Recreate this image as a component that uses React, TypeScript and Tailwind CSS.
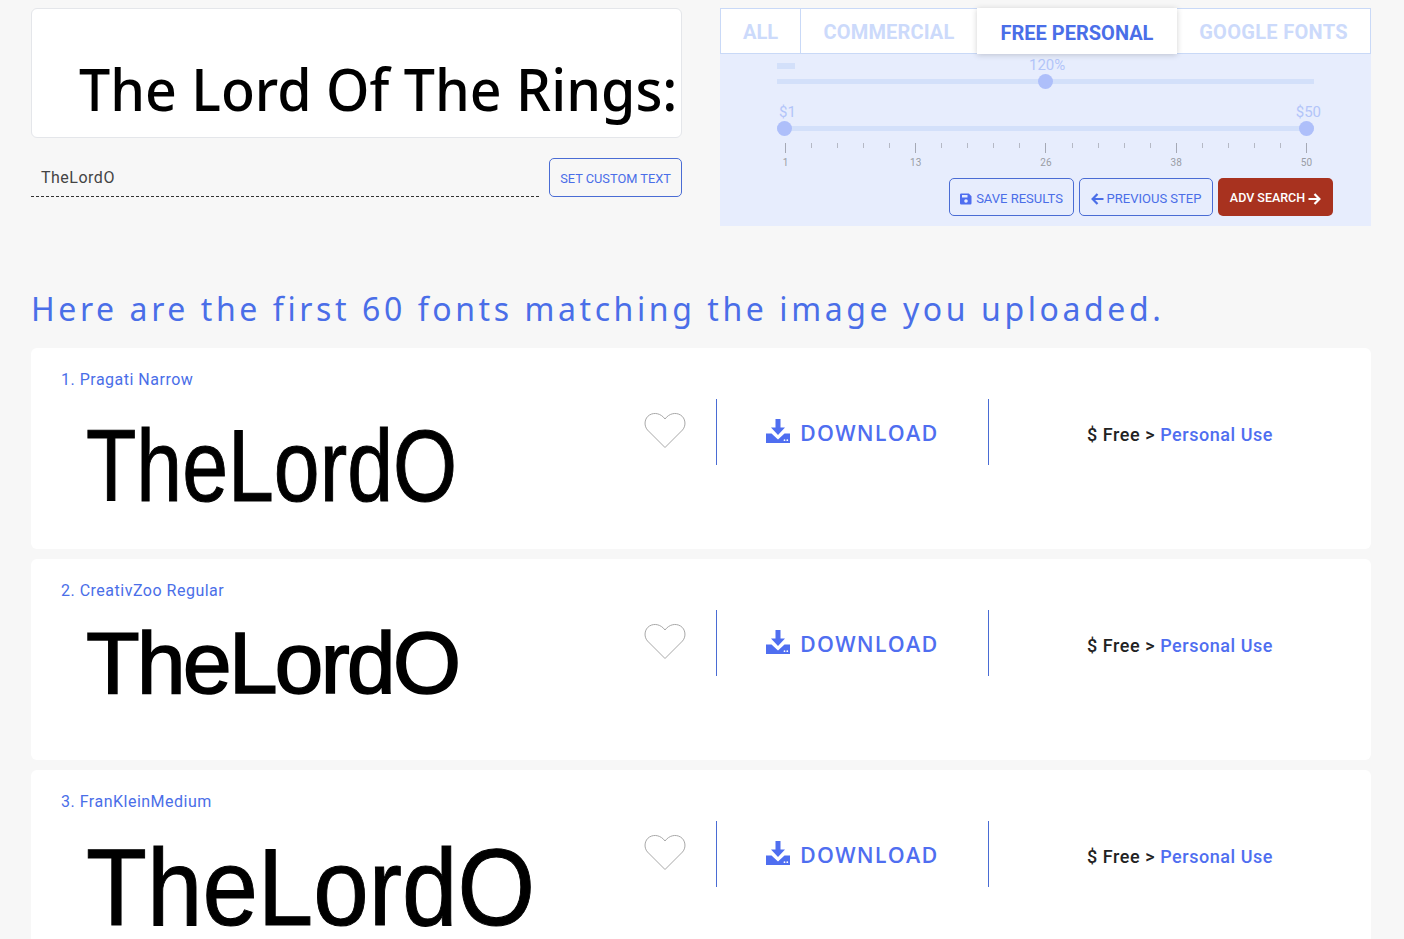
const ticks = Array.from({ length: 21 }, (_, i) => i);
const majorLabels: Record<number, string> = { 0: "1", 5: "13", 10: "26", 15: "38", 20: "50" };

function Heart() {
  return (
    <svg width="42" height="37" viewBox="0 0 42 37" fill="none" stroke="#a8a8a8" strokeWidth="1">
      <path d="M21 35.5 L3.5 18 C-0.5 13.5 0.5 6 5.5 3 C10.5 0 17 1.5 21 7 C25 1.5 31.5 0 36.5 3 C41.5 6 42.5 13.5 38.5 18 Z" />
    </svg>
  );
}

function DownloadIcon() {
  return (
    <svg width="24" height="24" viewBox="0 0 24 24" fill="#4f6ef0">
      <path d="M9.5 0h5v8.5h4.5l-7 7.5-7-7.5h4.5z" />
      <path d="M0 14.5h5.5l6.5 6 6.5-6H24V24H0z" />
      <circle cx="18.5" cy="21.2" r="0.9" fill="#fff" />
      <circle cx="21.3" cy="21.2" r="0.9" fill="#fff" />
    </svg>
  );
}

function SaveIcon() {
  return (
    <svg width="12" height="12" viewBox="0 0 12 12" fill="#4f6ef0">
      <path fillRule="evenodd" d="M1.2 0.5h7.6L11.5 3.2v7.1a1.2 1.2 0 0 1-1.2 1.2H1.2A1.2 1.2 0 0 1 0 10.3V1.7A1.2 1.2 0 0 1 1.2 0.5zM2 2v2.5h5.5V2zM6 6.2a1.8 1.8 0 1 0 0 3.6a1.8 1.8 0 0 0 0-3.6z" />
    </svg>
  );
}

function Arrow({ left }: { left?: boolean }) {
  return (
    <svg width="13" height="12" viewBox="0 0 13 12" fill="none" stroke="currentColor" strokeWidth="2.2" className={left ? "" : "rotate-180"}>
      <path d="M12.5 6H2M6.5 1L1.6 6l4.9 5" />
    </svg>
  );
}

function Row({ title, sample, sampleClass, boxClass }: { title: string; sample: string; sampleClass: string; boxClass: string }) {
  return (
    <div className={"bg-white rounded-md flex shrink-0 " + boxClass}>
      <div className="w-[610px] pl-[30px] pt-[22px] shrink-0">
        <div className="text-[16px] leading-[20px] tracking-[0.5px] text-[#4a6ee8] font-['Roboto',sans-serif]">{title}</div>
        <div className={"text-black whitespace-nowrap origin-left ml-[25px] w-fit " + sampleClass}>{sample}</div>
      </div>
      <div className="w-[75px] shrink-0 pt-[64px] pl-[3px]"><Heart /></div>
      <div className="w-[273px] h-[66px] mt-[51px] shrink-0 border-x border-[#4a6cd4] flex pl-[49px]">
        <div className="flex items-start gap-[10px] mt-[20px]">
          <DownloadIcon />
          <span className="text-[21.5px] leading-[28px] font-semibold tracking-[1.25px] text-[#4f6ef0] font-['Open_Sans',sans-serif]">DOWNLOAD</span>
        </div>
      </div>
      <div className="pl-[98px] pt-[76px] text-[18px] leading-[22px] tracking-[0.55px] font-medium font-['Roboto',sans-serif] text-[#222] whitespace-nowrap">
        $ Free &gt; <span className="text-[#4f6ef0]">Personal Use</span>
      </div>
    </div>
  );
}

export default function App() {
  return (
    <div className="h-screen overflow-hidden bg-[#f7f7f7] pl-[31px] pr-[33px] pt-[8px] font-['Roboto',sans-serif]">
      <div className="flex gap-[38px]">
        <div className="w-[651px] shrink-0">
          <div className="h-[130px] bg-white border border-[#e4e6ea] rounded-md pl-[47px] pt-[44px] overflow-hidden">
            <div className="text-[58px] leading-[72px] font-medium text-black whitespace-nowrap origin-left scale-x-[0.957] font-['Noto_Sans',sans-serif]">The Lord Of The Rings:</div>
          </div>
          <div className="flex gap-[10px] mt-[20px]">
            <div className="flex-1 h-[39px] border-b border-dashed border-[#333] pl-[10px] pt-[10px] text-[16px] leading-[20px] tracking-[0.5px] text-[#444]">TheLordO</div>
            <button className="w-[133px] h-[39px] pt-[2px] border border-[#4a6cd4] rounded-[5px] text-[12.8px] text-[#4a6ee8]">SET CUSTOM TEXT</button>
          </div>
        </div>

        <div className="w-[651px] h-[218px] shrink-0 bg-[#e7edfd]">
          <div className="flex h-[46px] bg-white border border-[#c9d9f7] text-[20px] font-bold">
            <div className="w-[80px] pt-[2px] border-r border-[#c9d9f7] text-[#ccdafb] flex items-center justify-center">ALL</div>
            <div className="w-[176px] pt-[2px] tracking-[0.15px] text-[#ccdafb] flex items-center justify-center">COMMERCIAL</div>
            <div className="w-[200px] h-[46px] pt-[3px] -mt-px bg-white shadow-[0_1px_6px_rgba(0,0,0,0.18)] text-[#4a6ee8] flex items-center justify-center relative">FREE PERSONAL</div>
            <div className="flex-1 pt-[2px] tracking-[0.3px] text-[#ccdafb] flex items-center justify-center">GOOGLE FONTS</div>
          </div>

          <div className="mx-[57px] w-[537px]">
            <div className="flex h-[20px] pt-[2px]">
              <div className="w-[18px] h-[6px] mt-[7px] bg-[#d3e0fa]" />
              <div className="text-[15px] leading-[18px] text-[#b3c5f9] ml-[234px]">120%</div>
            </div>
            <div className="relative h-[5px] mt-[5px] bg-[#d3e0fa]">
              <div className="absolute left-[261px] -top-[5px] w-[15px] h-[15px] rounded-full bg-[#aebffa]" />
            </div>
            <div className="flex justify-between text-[15px] leading-[18px] text-[#b3c5f9] mt-[19px] px-[2px]">
              <span>$1</span>
              <span className="-mr-[9px]">$50</span>
            </div>
            <div className="relative h-[5px] mt-[5px] bg-[#d3e0fa]">
              <div className="absolute left-0 -top-[5px] w-[15px] h-[15px] rounded-full bg-[#aebffa]" />
              <div className="absolute right-0 -top-[5px] w-[15px] h-[15px] rounded-full bg-[#aebffa]" />
            </div>
            <div className="flex justify-between mt-[12px] ml-[8px] w-[522px]">
              {ticks.map((t) => (
                <div key={t} className="w-px flex flex-col items-center">
                  <div className={majorLabels[t] ? "w-px h-[10px] bg-[#a5a9b5]" : "w-px h-[5px] mb-[5px] bg-[#b5b9c5]"} />
                  <div className="h-[13px] mt-[3px] text-[10px] leading-[13px] text-[#9a9da5] whitespace-nowrap">{majorLabels[t] ?? ""}</div>
                </div>
              ))}
            </div>
          </div>

          <div className="flex justify-end gap-[5px] mt-[9px] pr-[38px] text-[13px]">
            <button className="w-[125px] h-[38px] pt-[3px] border border-[#4a6cd4] rounded-[5px] text-[#4a6ee8] flex items-center justify-center gap-[4px]">
              <SaveIcon />SAVE RESULTS
            </button>
            <button className="w-[134px] h-[38px] pt-[3px] border border-[#4a6cd4] rounded-[5px] text-[#4a6ee8] flex items-center justify-center gap-[3px]">
              <Arrow left />PREVIOUS STEP
            </button>
            <button className="w-[115px] h-[38px] pt-[3px] bg-[#a8321f] rounded-[5px] text-white text-[12.5px] font-medium flex items-center justify-center gap-[3px]">
              ADV SEARCH<Arrow />
            </button>
          </div>
        </div>
      </div>

      <h1 className="mt-[60px] text-[32px] leading-[46px] tracking-[3.58px] text-[#4a6ee8] whitespace-nowrap font-['Noto_Sans',sans-serif]">
        Here are the first 60 fonts matching the image you uploaded.
      </h1>

      <div className="flex flex-col gap-[10px] mt-[16px]">
        <Row title="1. Pragati Narrow" sample="TheLordO" boxClass="h-[201px]" sampleClass="text-[102px] leading-[110px] mt-[21px] scale-x-[0.808] [-webkit-text-stroke:1px_black] font-['Liberation_Sans',sans-serif]" />
        <Row title="2. CreativZoo Regular" sample="TheLordO" boxClass="h-[201px]" sampleClass="text-[88px] leading-[90px] mt-[17px] tracking-[-3px] [-webkit-text-stroke:1.5px_black] font-['Liberation_Sans',sans-serif]" />
        <Row title="3. FranKleinMedium" sample="TheLordO" boxClass="h-[201px]" sampleClass="text-[109px] leading-[90px] mt-[30px] scale-x-[0.915] [-webkit-text-stroke:1px_black] font-['Liberation_Sans',sans-serif]" />
      </div>
    </div>
  );
}
